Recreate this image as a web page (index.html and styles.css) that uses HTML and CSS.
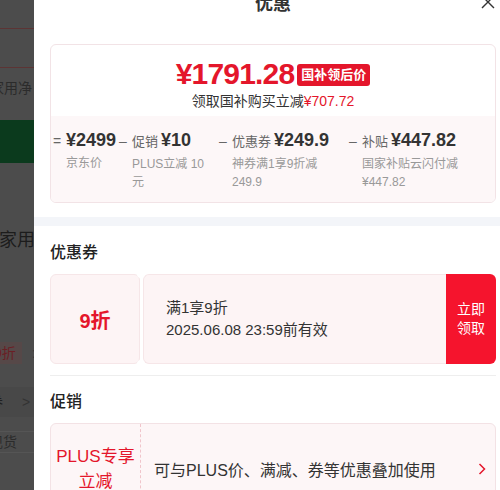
FILE: index.html
```html
<!DOCTYPE html>
<html lang="zh-CN">
<head>
    <meta charset="UTF-8">
    <meta name="viewport" content="width=device-width, initial-scale=1.0">
    <title>优惠</title>
    <link rel="stylesheet" href="styles.css">
</head>
<body>
    <!-- product page behind the drawer, shown dimmed -->
    <div class="page">
        <div class="pg-head"></div>
        <div class="pg-bar"></div>
        <div class="pg-name">家用净</div>
        <div class="pg-btn"></div>
        <div class="pg-title">家用</div>
        <div class="pg-tags"><span class="pg-tag">9折</span><span class="pg-sep">:</span></div>
        <div class="pg-row"><span class="pg-row-txt">券</span><span class="pg-row-arrow">&gt;</span></div>
        <div class="pg-box">现货</div>
    </div>

    <div class="drawer">
        <div class="dr-head">
            <span></span>
            <span class="dr-title">优惠</span>
            <svg class="dr-close" viewBox="0 0 14 14" width="14" height="14">
                <path d="M1 1 L13 13 M13 1 L1 13" stroke="#333" stroke-width="1.4" fill="none"/>
            </svg>
        </div>

        <div class="dr-body">
            <div class="price-card">
                <div class="price-main">
                    <div class="final">
                        <span class="final-num">¥1791.28</span>
                        <span class="final-tag">国补领后价</span>
                    </div>
                    <div class="final-sub">领取国补购买立减<em>¥707.72</em></div>
                </div>
                <div class="price-calc">
                    <div class="calc-col c1">
                        <div class="calc-top"><span class="op">=</span><span class="calc-val">¥2499</span></div>
                        <div class="calc-desc">京东价</div>
                    </div>
                    <div class="calc-col c2">
                        <div class="calc-top"><span class="op">–</span><span class="calc-label">促销</span><span class="calc-val">¥10</span></div>
                        <div class="calc-desc">PLUS立减 10 元</div>
                    </div>
                    <div class="calc-col c3">
                        <div class="calc-top"><span class="op">–</span><span class="calc-label">优惠券</span><span class="calc-val">¥249.9</span></div>
                        <div class="calc-desc">神券满1享9折减 249.9</div>
                    </div>
                    <div class="calc-col c4">
                        <div class="calc-top"><span class="op">–</span><span class="calc-label">补贴</span><span class="calc-val">¥447.82</span></div>
                        <div class="calc-desc">国家补贴云闪付减 ¥447.82</div>
                    </div>
                </div>
            </div>
        </div>

        <div class="band"></div>

        <div class="sec">
            <div class="sec-title">优惠券</div>
            <div class="coupon">
                <div class="cp-left">9折</div>
                <div class="cp-main">
                    <div>满1享9折</div>
                    <div>2025.06.08 23:59前有效</div>
                </div>
                <div class="cp-btn">立即<br>领取</div>
            </div>
            <div class="divider"></div>

            <div class="sec-title">促销</div>
            <div class="promo">
                <div class="pr-left">PLUS专享<br>立减</div>
                <div class="pr-text">可与PLUS价、满减、券等优惠叠加使用</div>
                <svg class="pr-arrow" viewBox="0 0 8 12" width="8" height="12">
                    <polyline points="1.5,1 6.5,6 1.5,11" stroke="#e4162b" stroke-width="1.5" fill="none"/>
                </svg>
            </div>
        </div>
    </div>
</body>
</html>
```

FILE: styles.css
```css
html, body {
    margin: 0;
    padding: 0;
}
body {
    font-family: "Liberation Sans", "Noto Sans CJK SC", sans-serif;
    color: #333;
    background-color: #4c4c4c;
    position: relative;
    width: 500px;
    height: 490px;
}
.drawer div {
    box-sizing: border-box;
}

/* page under the drawer, colours already dimmed by the mask */
.page {
    width: 34px;
    height: 490px;
    overflow: hidden;
    white-space: nowrap;
    background-color: #4c4c4c;
}
.pg-head {
    height: 28px;
    border-bottom: 1px solid #5c3434;
}
.pg-bar {
    height: 38px;
    border-bottom: 1px solid #5c3434;
}
.pg-name {
    height: 40px;
    line-height: 40px;
    font-size: 14px;
    color: #2b2b2b;
    text-indent: -10px;
}
.pg-btn {
    margin-top: 12px;
    height: 43px;
    background-color: #0b3a1d;
}
.pg-title {
    margin-top: 62px;
    height: 30px;
    line-height: 30px;
    font-size: 18px;
    color: #1c1c1c;
    text-indent: -1px;
}
.pg-tags {
    margin-top: 87px;
    height: 22px;
}
.pg-tag {
    display: inline-block;
    margin-left: -12px;
    padding: 0 6px;
    line-height: 22px;
    font-size: 14px;
    color: #6a1f25;
    background-color: #564848;
}
.pg-sep {
    margin-left: 10px;
    font-size: 14px;
    color: #3a3a3a;
}
.pg-row {
    margin-top: 23px;
    height: 30px;
    line-height: 30px;
    font-size: 14px;
    background-color: #484848;
}
.pg-row-txt {
    margin-left: -11px;
    color: #1f1f1f;
}
.pg-row-arrow {
    margin-left: 19px;
    color: #333;
}
.pg-box {
    margin: 14px 0 0 -20px;
    width: 50px;
    height: 20px;
    padding-left: 8px;
    line-height: 20px;
    font-size: 14px;
    color: #2b2b2b;
    border: 1px solid #555;
}

/* drawer */
.drawer {
    position: absolute;
    top: 0;
    left: 34px;
    width: 478px;
    height: 490px;
    overflow: hidden;
    background-color: #fff;
}
.dr-head {
    display: grid;
    grid-template-columns: 1fr auto 1fr;
    align-items: center;
    height: 44px;
    margin-top: -20px;
    padding: 0 17px;
}
.dr-title {
    font-size: 18px;
    font-weight: bold;
    color: #333;
}
.dr-close {
    justify-self: end;
}
.dr-body {
    padding: 20px 16px 0;
}
.price-card {
    border: 1px solid #f2e3e6;
    border-radius: 6px;
    overflow: hidden;
}
.price-main {
    padding: 14px 0 5px;
    text-align: center;
}
.final {
    display: flex;
    justify-content: center;
    align-items: flex-end;
    height: 30px;
}
.final-num {
    font-size: 30px;
    line-height: 30px;
    font-weight: bold;
    color: #e4162b;
    letter-spacing: -0.8px;
}
.final-tag {
    margin: 0 0 3px 3px;
    padding: 0 4px;
    border-radius: 3px;
    background-color: #e4162b;
    color: #fff;
    font-size: 13px;
    line-height: 22px;
    font-weight: bold;
}
.final-sub {
    margin-top: 2px;
    font-size: 14px;
    line-height: 20px;
    color: #333;
}
.final-sub em {
    font-style: normal;
    color: #e4162b;
}
.price-calc {
    display: flex;
    padding: 12px 2px 11px;
    background-color: #fdf7f8;
}
.c1 { width: 66px; }
.c2 { width: 100px; }
.c3 { width: 130px; }
.c4 { flex: 1; }
.calc-top {
    line-height: 24px;
    white-space: nowrap;
}
.op {
    display: inline-block;
    width: 13px;
    font-size: 14px;
    color: #666;
}
.calc-label {
    margin-right: 3px;
    font-size: 13px;
    color: #666;
}
.calc-val {
    font-size: 18px;
    font-weight: bold;
    color: #333;
}
.calc-desc {
    margin-top: 1px;
    padding: 0 12px 0 13px;
    font-size: 12px;
    line-height: 18px;
    color: #999;
}
.band {
    margin-top: 14px;
    height: 9px;
    background-color: #f3f5f9;
}
.sec {
    padding: 0 16px;
}
.sec-title {
    margin: 16px 0 10px;
    font-size: 16px;
    line-height: 22px;
    font-weight: 500;
    color: #222;
}

/* coupon */
.coupon {
    display: flex;
    height: 90px;
}
.cp-left {
    position: relative;
    width: 90px;
    display: flex;
    align-items: center;
    justify-content: center;
    background-color: #fdf4f5;
    border: 1px solid #f6e6e8;
    border-radius: 6px;
    color: #e4162b;
    font-size: 20px;
    font-weight: bold;
}
.cp-left::before,
.cp-left::after {
    content: "";
    position: absolute;
    right: -6px;
    width: 8px;
    height: 8px;
    border-radius: 50%;
    background-color: #fff;
}
.cp-left::before { top: -5px; }
.cp-left::after { bottom: -5px; }
.cp-main {
    flex: 1;
    margin-left: 3px;
    padding-left: 22px;
    display: flex;
    flex-direction: column;
    justify-content: center;
    background-color: #fdf4f5;
    border: 1px solid #f6e6e8;
    border-right: 0;
    border-radius: 6px 0 0 6px;
    font-size: 15px;
    line-height: 22px;
    color: #333;
}
.cp-btn {
    width: 50px;
    display: flex;
    align-items: center;
    justify-content: center;
    text-align: center;
    background-color: #f5142d;
    border-radius: 0 6px 6px 0;
    color: #fff;
    font-size: 14px;
    line-height: 19px;
}
.divider {
    margin: 11px 0 -1px;
    height: 1px;
    background-color: #eee;
}

/* promotion */
.promo {
    display: flex;
    align-items: center;
    height: 92px;
    background-color: #fdf6f7;
    border: 1px solid #f3e2e5;
    border-radius: 6px;
}
.pr-left {
    width: 90px;
    height: 100%;
    display: flex;
    align-items: center;
    justify-content: center;
    text-align: center;
    border-right: 1px dashed #f0c5cb;
    color: #e4162b;
    font-size: 17px;
    line-height: 25px;
}
.pr-text {
    flex: 1;
    padding-left: 13px;
    font-size: 16px;
    color: #333;
}
.pr-arrow {
    margin-right: 9px;
}
```
